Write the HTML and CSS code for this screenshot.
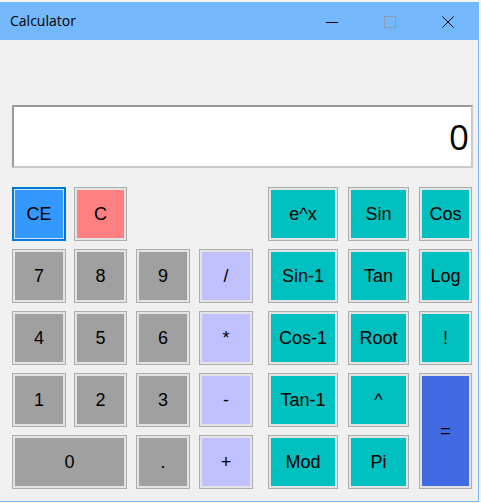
FILE: index.html
```html
<!DOCTYPE html>
<html>
<head>
<meta charset="utf-8">
<link rel="stylesheet" href="styles.css">
</head>
<body>
<div class="window">
  <div class="titlebar">
    <span class="title">Calculator</span>
    <div class="controls">
      <span class="ctl"><svg width="12" height="12" viewBox="0 0 12 12"><line x1="0" y1="6.5" x2="12" y2="6.5" stroke="#000" stroke-width="1"/></svg></span>
      <span class="ctl"><svg width="12" height="12" viewBox="0 0 12 12"><rect x="0.5" y="0.5" width="11" height="11" fill="none" stroke="#8a9bb0" stroke-width="1"/></svg></span>
      <span class="ctl"><svg width="12" height="12" viewBox="0 0 12 12"><path d="M0.5 0.5 L11.5 11.5 M11.5 0.5 L0.5 11.5" stroke="#000" stroke-width="1"/></svg></span>
    </div>
  </div>
  <div class="content">
    <div class="display">0</div>
    <div class="keys">
      <button class="k ce c1 r1">CE</button>
      <button class="k clr c2 r1">C</button>
      <button class="k fn c5 r1">e^x</button>
      <button class="k fn c6 r1">Sin</button>
      <button class="k fn c7 r1">Cos</button>

      <button class="k num c1 r2">7</button>
      <button class="k num c2 r2">8</button>
      <button class="k num c3 r2">9</button>
      <button class="k op c4 r2">/</button>
      <button class="k fn c5 r2">Sin-1</button>
      <button class="k fn c6 r2">Tan</button>
      <button class="k fn c7 r2">Log</button>

      <button class="k num c1 r3">4</button>
      <button class="k num c2 r3">5</button>
      <button class="k num c3 r3">6</button>
      <button class="k op c4 r3">*</button>
      <button class="k fn c5 r3">Cos-1</button>
      <button class="k fn c6 r3">Root</button>
      <button class="k fn c7 r3">!</button>

      <button class="k num c1 r4">1</button>
      <button class="k num c2 r4">2</button>
      <button class="k num c3 r4">3</button>
      <button class="k op c4 r4">-</button>
      <button class="k fn c5 r4">Tan-1</button>
      <button class="k fn c6 r4">^</button>
      <button class="k eq c7 r4 tall">=</button>

      <button class="k num c1 r5 wide">0</button>
      <button class="k num c3 r5">.</button>
      <button class="k op c4 r5">+</button>
      <button class="k fn c5 r5">Mod</button>
      <button class="k fn c6 r5">Pi</button>
    </div>
  </div>
</div>
</body>
</html>
```
FILE: styles.css
```css
html, body {
  margin: 0;
  padding: 0;
  background: #f4f4f4;
}
.window {
  width: 478px;
  height: 499px;
  margin-top: 2px;
  background: #f0f0f0;
  border-right: 1px solid #7ab8f5;
  border-bottom: 1px solid #7ab8f5;
  display: flex;
  flex-direction: column;
}
.titlebar {
  height: 38px;
  width: 479px;
  background: #72b8fa;
  display: flex;
  align-items: center;
  justify-content: space-between;
  flex-shrink: 0;
}
.title {
  font-family: "Open Sans", "Noto Sans", sans-serif;
  font-size: 14px;
  color: #000;
  padding-left: 10px;
  padding-bottom: 2px;
}
.controls {
  display: flex;
  padding-right: 25px;
}
.ctl {
  width: 12px;
  height: 12px;
  display: flex;
  margin-left: 46px;
  margin-top: 2px;
}
.ctl svg { display: block; }
.content {
  padding: 65px 0 0 12px;
}
.display {
  width: 455px;
  height: 59px;
  background: #fff;
  border: 2px solid #a0a0a0;
  border-color: #9a9a9a #c8c8c8 #c8c8c8 #9a9a9a;
  font-family: "Open Sans", "Noto Sans", sans-serif;
  font-size: 35px;
  line-height: 59px;
  text-align: right;
  padding-right: 2px;
  color: #000;
}
.keys {
  margin-top: 19px;
  display: grid;
  grid-template-columns: 54px 8px 53px 9px 54px 9px 54px 15px 70px 10px 61px 10px 53px;
  grid-template-rows: 54px 8px 54px 8px 54px 8px 54px 8px 54px;
}
.k {
  margin: 0;
  padding: 0;
  font-family: "Liberation Sans", Arial, sans-serif;
  font-size: 18px;
  color: #000;
  border: 1px solid #adadad;
  box-shadow: inset 0 0 0 2px #e3e3e3;
}
.c1 { grid-column: 1; }
.c2 { grid-column: 3; }
.c3 { grid-column: 5; }
.c4 { grid-column: 7; }
.c5 { grid-column: 9; }
.c6 { grid-column: 11; }
.c7 { grid-column: 13; }
.r1 { grid-row: 1; }
.r2 { grid-row: 3; }
.r3 { grid-row: 5; }
.r4 { grid-row: 7; }
.r5 { grid-row: 9; }
.wide { grid-column: 1 / 4; }
.tall { grid-row: 7 / 10; }
.num { background: #a0a0a0; }
.op { background: #c0c0ff; }
.fn { background: #00c0c0; }
.eq { background: #4169e1; }
.clr { background: #ff8080; }
.ce {
  background: #3399ff;
  border: 2px solid #0078d7;
  box-shadow: inset 0 0 0 1px #cde6fb;
}
```
